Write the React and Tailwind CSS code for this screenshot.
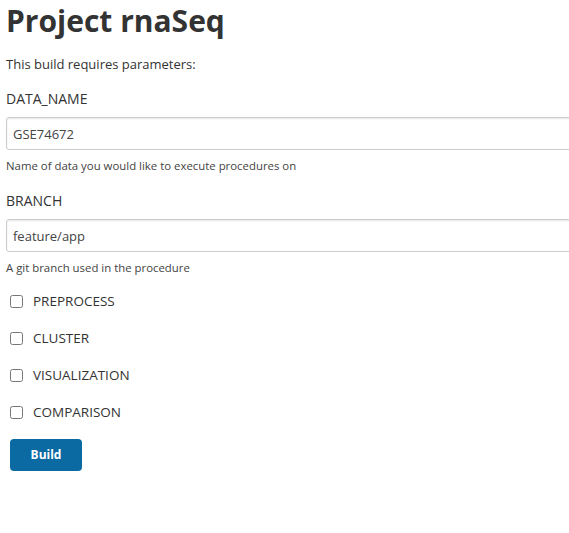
import React from 'react';

const params = [
  { name: 'DATA_NAME', value: 'GSE74672', help: 'Name of data you would like to execute procedures on' },
  { name: 'BRANCH', value: 'feature/app', help: 'A git branch used in the procedure' },
];

const flags = ['PREPROCESS', 'CLUSTER', 'VISUALIZATION', 'COMPARISON'];

export default function App() {
  return (
    <div className="min-h-screen bg-white text-[#333] overflow-hidden" style={{ fontFamily: '"Open Sans", "Noto Sans", sans-serif' }}>
      <div className="pl-[6px] w-[600px]">
        {/* Title */}
        <h1 className="text-[30px] font-bold leading-[40px] pt-[1px]">Project rnaSeq</h1>
        <p className="text-[13px] mt-[13px] leading-[20px]">This build requires parameters:</p>

        {/* String parameters */}
        <div className="mt-[15px] flex flex-col gap-[16px]">
          {params.map((p) => (
            <div key={p.name}>
              <div className="text-[14px] leading-[20px]">{p.name}</div>
              <input
                type="text"
                defaultValue={p.value}
                className="mt-[8px] block w-full h-[33px] border border-[#ccc] rounded-[3px] px-[6px] text-[13px] text-[#444] shadow-[inset_0_1px_2px_rgba(0,0,0,0.1)] outline-none"
              />
              <div className="text-[11.4px] leading-[18px] mt-[7px] text-[#444]">{p.help}</div>
            </div>
          ))}
        </div>

        {/* Boolean parameters */}
        <div className="mt-[14px] pl-[4px] flex flex-col gap-[17px]">
          {flags.map((f) => (
            <label key={f} className="flex items-center h-[20px] text-[13.5px]">
              <input type="checkbox" className="w-[13px] h-[13px] m-0" />
              <span className="ml-[10px]">{f}</span>
            </label>
          ))}
        </div>

        <button className="mt-[17px] ml-[4px] w-[72px] h-[32px] bg-[#0b6aa2] text-white text-[12px] font-bold rounded-[4px]">
          Build
        </button>
      </div>
    </div>
  );
}
